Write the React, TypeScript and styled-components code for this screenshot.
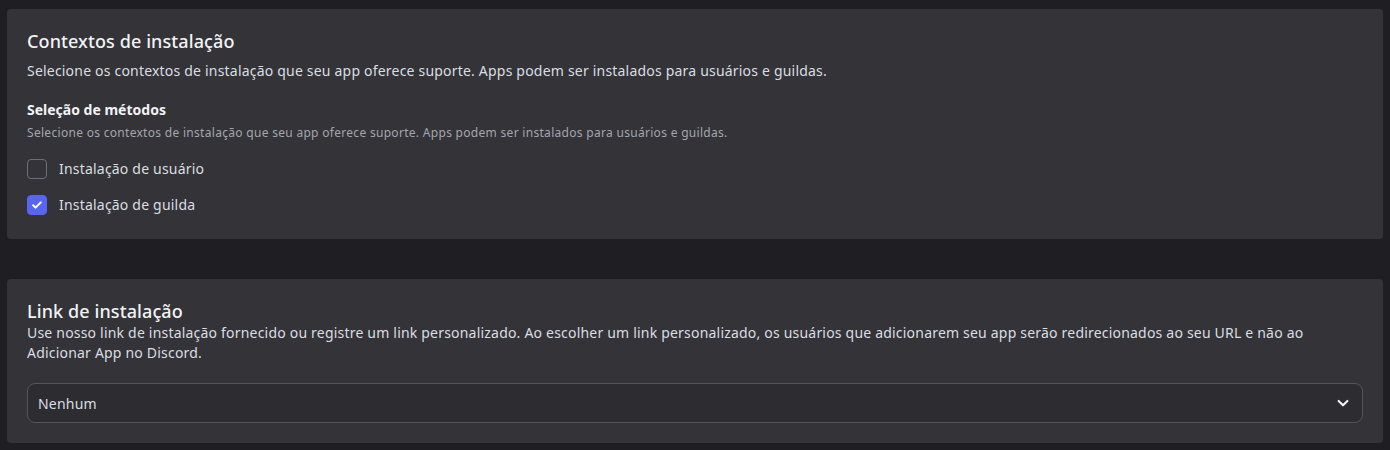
import React, { useState } from "react";
import styled, { createGlobalStyle } from "styled-components";

const GlobalStyle = createGlobalStyle`
  html, body {
    margin: 0;
    padding: 0;
    background: #1f1f23;
  }
  body {
    font-family: "Noto Sans", "Liberation Sans", sans-serif;
    -webkit-font-smoothing: antialiased;
  }
`;

const Page = styled.div`
  display: flex;
  flex-direction: column;
  gap: 40px;
  padding: 9px 7px 7px 7px;
  width: 1390px;
  height: 450px;
  box-sizing: border-box;
  background: #1f1f23;
`;

const Card = styled.section`
  background: #333338;
  border-radius: 4px;
  padding: 20px;
  display: flex;
  flex-direction: column;
`;

const Title = styled.h2<{ $spaced?: boolean }>`
  margin: 0 0 ${({ $spaced }) => ($spaced ? "8px" : "0")} 0;
  font-size: 18px;
  line-height: 24px;
  font-weight: 500;
  color: #f2f3f5;
  letter-spacing: 0.1px;
`;

const Description = styled.p`
  margin: 0;
  font-size: 14px;
  line-height: 20px;
  color: #dbdee1;
  letter-spacing: 0.2px;
`;

const SubHeading = styled.h3`
  margin: 19px 0 5px 0;
  font-size: 14px;
  line-height: 20px;
  font-weight: 700;
  color: #f2f3f5;
`;

const Hint = styled.p`
  margin: 0;
  font-size: 12px;
  line-height: 16px;
  color: #a3a6ad;
  letter-spacing: 0.3px;
`;

const OptionList = styled.div`
  display: flex;
  flex-direction: column;
  gap: 16px;
  margin: 18px 0 4px 0;
`;

const OptionRow = styled.label`
  display: flex;
  align-items: center;
  gap: 12px;
  cursor: pointer;
  font-size: 14px;
  line-height: 20px;
  color: #dbdee1;
  letter-spacing: 0.2px;
`;

const Box = styled.span<{ $checked: boolean }>`
  width: 20px;
  height: 20px;
  box-sizing: border-box;
  border-radius: 4px;
  display: flex;
  align-items: center;
  justify-content: center;
  border: 1px solid ${({ $checked }) => ($checked ? "#5865f2" : "#6d6f78")};
  background: ${({ $checked }) => ($checked ? "#5865f2" : "transparent")};
`;

const Select = styled.div`
  margin-top: 20px;
  height: 40px;
  box-sizing: border-box;
  border: 1px solid #55565c;
  border-radius: 8px;
  background: #2c2c31;
  display: flex;
  align-items: center;
  justify-content: space-between;
  padding: 0 12px 0 10px;
  font-size: 14px;
  color: #dbdee1;
  letter-spacing: 0.2px;
`;

const Check = () => (
  <svg width="14" height="14" viewBox="0 0 24 24" fill="none">
    <path
      d="M5.5 12.5l4 4L18.5 7.5"
      stroke="#fff"
      strokeWidth="3.6"
      strokeLinecap="round"
      strokeLinejoin="round"
    />
  </svg>
);

const Chevron = () => (
  <svg width="14" height="14" viewBox="0 0 24 24" fill="none">
    <path
      d="M4.5 8.5l7.5 7.5 7.5-7.5"
      stroke="#f2f3f5"
      strokeWidth="3.6"
      strokeLinecap="round"
      strokeLinejoin="round"
    />
  </svg>
);

const Option = ({
  label,
  checked,
  onToggle,
}: {
  label: string;
  checked: boolean;
  onToggle: () => void;
}) => (
  <OptionRow onClick={onToggle}>
    <Box $checked={checked}>{checked && <Check />}</Box>
    {label}
  </OptionRow>
);

export default function App() {
  const [user, setUser] = useState(false);
  const [guild, setGuild] = useState(true);
  return (
    <>
      <GlobalStyle />
      <Page>
        <Card>
          <Title $spaced>Contextos de instalação</Title>
          <Description>
            Selecione os contextos de instalação que seu app oferece suporte. Apps podem ser
            instalados para usuários e guildas.
          </Description>
          <SubHeading>Seleção de métodos</SubHeading>
          <Hint>
            Selecione os contextos de instalação que seu app oferece suporte. Apps podem ser
            instalados para usuários e guildas.
          </Hint>
          <OptionList>
            <Option label="Instalação de usuário" checked={user} onToggle={() => setUser(!user)} />
            <Option label="Instalação de guilda" checked={guild} onToggle={() => setGuild(!guild)} />
          </OptionList>
        </Card>
        <Card>
          <Title>Link de instalação</Title>
          <Description>
            Use nosso link de instalação fornecido ou registre um link personalizado. Ao escolher
            um link personalizado, os usuários que adicionarem seu app serão redirecionados ao seu
            URL e não ao Adicionar App no Discord.
          </Description>
          <Select>
            <span>Nenhum</span>
            <Chevron />
          </Select>
        </Card>
      </Page>
    </>
  );
}
